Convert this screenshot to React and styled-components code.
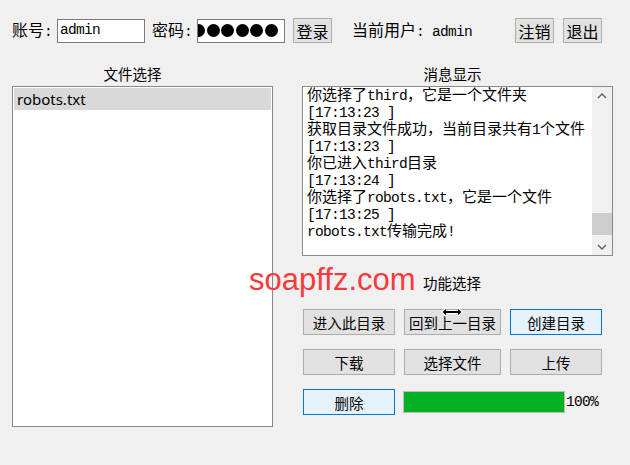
import React from 'react';
import styled, { createGlobalStyle } from 'styled-components';

const GlobalStyle = createGlobalStyle`
  html, body {
    margin: 0;
    padding: 0;
    background: #f0f0f0;
  }
`;

const CJK = `"Noto Sans CJK SC", "Noto Sans", sans-serif`;

const Window = styled.div`
  position: relative;
  width: 630px;
  height: 465px;
  background: #f0f0f0;
  overflow: hidden;
  color: #000;
`;

// half-width latin runs, like the old Song-style UI font: 8px per char
const Ascii = styled.span`
  font-family: "Liberation Mono", "DejaVu Sans Mono", monospace;
  font-size: 14.5px;
  letter-spacing: -0.7px;
`;

const Mixed = ({ text }) =>
  text.split(/([\x00-\x7F]+)/).map((part, i) =>
    /^[\x00-\x7F]+$/.test(part) ? <Ascii key={i}>{part}</Ascii> : part
  );

const TopBar = styled.div`
  display: flex;
  align-items: center;
  height: 25px;
  padding: 18px 0 0 12px;
  font-family: ${CJK};
  font-size: 16px;
`;

const Caption = styled.span`
  margin-left: ${p => p.$ml || 0}px;
  white-space: pre;
  line-height: 17px;
`;

const TextBox = styled.div`
  box-sizing: border-box;
  width: 88px;
  height: 24px;
  margin-left: 5px;
  border: 1px solid #7a7a7a;
  background: #fff;
  display: flex;
  align-items: center;
  padding-left: 2px;
  overflow: hidden;
  line-height: 17px;
`;

const DotsBox = styled(TextBox)`
  justify-content: flex-end;
  gap: 1.6px;
  padding: 0 6px 0 0;
`;

const Dot = styled.span`
  flex: none;
  width: 13px;
  height: 13px;
  border-radius: 50%;
  background: #000;
`;

const SmallButton = styled.button`
  box-sizing: border-box;
  width: 39px;
  height: 25px;
  margin-left: ${p => p.$ml || 0}px;
  padding: 0;
  border: 1px solid #adadad;
  background: #e1e1e1;
  font-family: ${CJK};
  font-size: 16px;
  color: #000;
`;

const Main = styled.div`
  display: flex;
  padding-left: 12px;
`;

const Column = styled.div`
  display: flex;
  flex-direction: column;
  width: ${p => p.$w}px;
  margin-left: ${p => p.$ml || 0}px;
`;

const Heading = styled.div`
  margin-top: 22px;
  margin-bottom: 4px;
  height: 17px;
  line-height: 17px;
  text-align: center;
  padding-right: ${p => p.$pr || 0}px;
  font-family: ${CJK};
  font-size: 14.5px;
`;

const ListBox = styled.div`
  box-sizing: border-box;
  height: 341px;
  border: 1px solid #828790;
  background: #fff;
  padding: 1px;
`;

const ListItem = styled.div`
  height: 22px;
  line-height: 22px;
  padding-left: 3px;
  background: ${p => (p.$selected ? '#d9d9d9' : 'transparent')};
  font-family: "Noto Sans", "Open Sans", sans-serif;
  font-size: 15px;
  color: #000;
`;

const MessageBox = styled.div`
  box-sizing: border-box;
  height: 170px;
  border: 1px solid #8a8a8a;
  background: #fff;
  display: flex;
`;

const MessageText = styled.div`
  flex: 1;
  overflow: hidden;
  padding-left: 4px;
  font-family: ${CJK};
  font-size: 15px;
  line-height: 17px;
  white-space: pre;
`;

const MessageLine = styled.div`
  height: 17px;
  line-height: 17px;
`;

const MessageLines = styled.div`
  margin-top: -2px;
`;

const ScrollBar = styled.div`
  width: 20px;
  display: flex;
  flex-direction: column;
  background: #f0f0f0;
`;

const ScrollArrow = styled.div`
  height: 17px;
  display: flex;
  align-items: center;
  justify-content: center;
`;

const ScrollTrack = styled.div`
  flex: 1;
  display: flex;
  flex-direction: column;
  justify-content: flex-end;
`;

const ScrollThumb = styled.div`
  height: 22px;
  margin-bottom: 3px;
  background: #cdcdcd;
`;

const SectionLabel = styled.div`
  margin: 18px 0 18px 121px;
  height: 17px;
  line-height: 17px;
  font-family: ${CJK};
  font-size: 14.5px;
`;

const ActionGrid = styled.div`
  display: grid;
  grid-template-columns: 92px 97px 92px;
  column-gap: 9px;
  row-gap: 14px;
  margin-left: 1px;
`;

const ActionButton = styled.button`
  box-sizing: border-box;
  height: 26px;
  padding: 0;
  border: 1px solid ${p => (p.$focused ? '#0078d7' : '#adadad')};
  background: ${p => (p.$focused ? '#e5f1fb' : '#e1e1e1')};
  font-family: ${CJK};
  font-size: 14.5px;
  color: #000;
`;

const ProgressRow = styled.div`
  grid-column: 2 / 4;
  display: flex;
  align-items: center;
  margin-left: -1px;
`;

const ProgressTrack = styled.div`
  box-sizing: border-box;
  width: 162px;
  height: 22px;
  border: 1px solid #bcbcbc;
  background: #e6e6e6;
`;

const ProgressFill = styled.div`
  height: 100%;
  background: #06b025;
`;

const Percent = styled(Ascii)`
  margin-left: 1px;
`;

const Watermark = styled.div`
  position: absolute;
  left: 249px;
  top: 264px;
  font-family: "Liberation Sans", Arial, sans-serif;
  font-size: 31px;
  line-height: 31px;
  color: #f83a3a;
  pointer-events: none;
`;

const Cursor = styled.svg`
  position: absolute;
  left: 440px;
  top: 306px;
`;

const Chevron = ({ up }) => (
  <svg width="10" height="6" viewBox="0 0 10 6">
    <polyline
      points={up ? '1,5 5,1 9,5' : '1,1 5,5 9,1'}
      fill="none"
      stroke="#606060"
      strokeWidth="1.4"
    />
  </svg>
);

const messages = [
  '你选择了third，它是一个文件夹',
  '[17:13:23 ]',
  '获取目录文件成功，当前目录共有1个文件',
  '[17:13:23 ]',
  '你已进入third目录',
  '[17:13:24 ]',
  '你选择了robots.txt，它是一个文件',
  '[17:13:25 ]',
  'robots.txt传输完成!',
];

const actions = [
  { label: '进入此目录' },
  { label: '回到上一目录' },
  { label: '创建目录', focused: true },
  { label: '下载' },
  { label: '选择文件' },
  { label: '上传' },
];

const progress = 100;

export default function App() {
  return (
    <Window>
      <GlobalStyle />
      <TopBar>
        <Caption><Mixed text="账号:" /></Caption>
        <TextBox><Ascii>admin</Ascii></TextBox>
        <Caption $ml={7}><Mixed text="密码:" /></Caption>
        <DotsBox>
          {Array.from({ length: 7 }).map((_, i) => (
            <Dot key={i} />
          ))}
        </DotsBox>
        <SmallButton $ml={8}>登录</SmallButton>
        <Caption $ml={20}><Mixed text="当前用户: admin" /></Caption>
        <SmallButton $ml={43}>注销</SmallButton>
        <SmallButton $ml={9}>退出</SmallButton>
      </TopBar>

      <Main>
        <Column $w={261}>
          <Heading $pr={20}>文件选择</Heading>
          <ListBox>
            <ListItem $selected>robots.txt</ListItem>
          </ListBox>
        </Column>

        <Column $w={311} $ml={29}>
          <Heading $pr={10}>消息显示</Heading>
          <MessageBox>
            <MessageText>
              <MessageLines>
                {messages.map((m, i) => (
                  <MessageLine key={i}><Mixed text={m} /></MessageLine>
                ))}
              </MessageLines>
            </MessageText>
            <ScrollBar>
              <ScrollArrow><Chevron up /></ScrollArrow>
              <ScrollTrack>
                <ScrollThumb />
              </ScrollTrack>
              <ScrollArrow><Chevron /></ScrollArrow>
            </ScrollBar>
          </MessageBox>

          <SectionLabel>功能选择</SectionLabel>
          <ActionGrid>
            {actions.map(a => (
              <ActionButton key={a.label} $focused={a.focused}>{a.label}</ActionButton>
            ))}
            <ActionButton $focused>删除</ActionButton>
            <ProgressRow>
              <ProgressTrack>
                <ProgressFill style={{ width: `${progress}%` }} />
              </ProgressTrack>
              <Percent>{progress}%</Percent>
            </ProgressRow>
          </ActionGrid>
        </Column>
      </Main>

      <Watermark>soapffz.com</Watermark>
      <Cursor width="24" height="12" viewBox="0 0 24 12">
        <path d="M1 6 L6 1 L6 4 L18 4 L18 1 L23 6 L18 11 L18 8 L6 8 L6 11 Z" fill="#fff" />
        <path d="M2.5 6 L6 2.8 L6 5 L18 5 L18 2.8 L21.5 6 L18 9.2 L18 7 L6 7 L6 9.2 Z" fill="#000" />
      </Cursor>
    </Window>
  );
}
